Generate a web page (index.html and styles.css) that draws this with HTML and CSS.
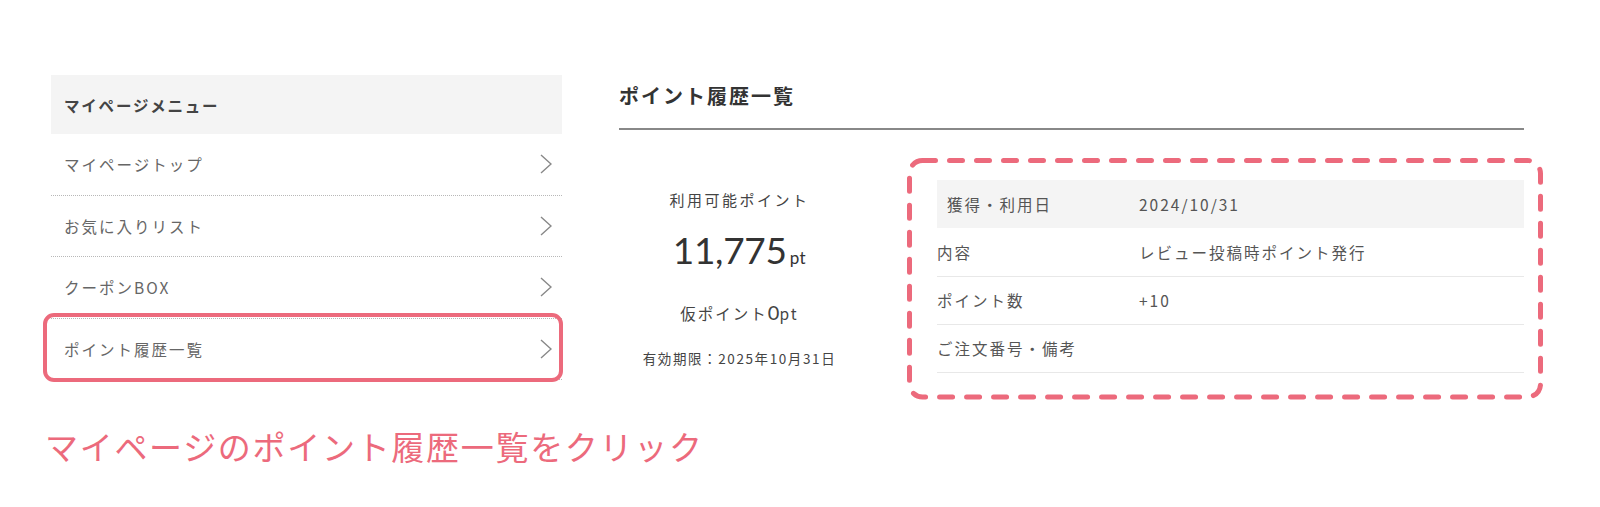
FILE: index.html
```html
<!DOCTYPE html>
<html lang="ja">
<head>
  <meta charset="UTF-8">
  <meta name="viewport" content="width=device-width, initial-scale=1.0">
  <title>ポイント履歴一覧</title>
  <link rel="stylesheet" href="styles.css">
</head>
<body>

  <div class="page">
    <div class="columns">
      <nav class="side-menu">
        <div class="menu-head">マイページメニュー</div>
        <a class="menu-item" href="#">マイページトップ<svg class="chev" viewBox="0 0 12 20"><polyline points="1,1 11,10 1,19"></polyline></svg></a>
        <a class="menu-item" href="#">お気に入りリスト<svg class="chev" viewBox="0 0 12 20"><polyline points="1,1 11,10 1,19"></polyline></svg></a>
        <a class="menu-item" href="#">クーポンBOX<svg class="chev" viewBox="0 0 12 20"><polyline points="1,1 11,10 1,19"></polyline></svg></a>
        <a class="menu-item is-marked" href="#">ポイント履歴一覧<svg class="chev" viewBox="0 0 12 20"><polyline points="1,1 11,10 1,19"></polyline></svg></a>
      </nav>

      <section class="main">
        <h2 class="main-title">ポイント履歴一覧</h2>

        <div class="point-body">
          <div class="summary">
            <p class="sum-label">利用可能ポイント</p>
            <p class="sum-total">11,775<span class="unit">pt</span></p>
            <p class="sum-temp">仮ポイント<span class="temp-num">0</span>pt</p>
            <p class="sum-limit">有効期限：2025年10月31日</p>
          </div>

          <div class="history">
            <svg class="dash-frame">
              <rect x="2.5" y="2.5" width="calc(100% - 5px)" height="calc(100% - 5px)" rx="13" ry="13"></rect>
            </svg>
            <table class="history-table">
              <tr class="row-head">
                <th>獲得・利用日</th>
                <td>2024/10/31</td>
              </tr>
              <tr>
                <th>内容</th>
                <td>レビュー投稿時ポイント発行</td>
              </tr>
              <tr>
                <th>ポイント数</th>
                <td>+10</td>
              </tr>
              <tr>
                <th>ご注文番号・備考</th>
                <td></td>
              </tr>
            </table>
          </div>
        </div>
      </section>
    </div>

    <p class="caption">マイページのポイント履歴一覧をクリック</p>
  </div>

</body>
</html>
```

FILE: styles.css
```css
* {
  margin: 0;
  padding: 0;
  box-sizing: border-box;
}

body {
  font-family: "Noto Sans CJK JP", "Noto Sans", sans-serif;
  background-color: #ffffff;
  color: #555;
}

.page {
  padding: 75px 0 0 51px;
}

.columns {
  display: flex;
  gap: 57px;
}

/* side menu */
.side-menu {
  width: 511px;
  display: flex;
  flex-direction: column;
}

.menu-head {
  height: 59px;
  background-color: #f4f4f4;
  padding-left: 13px;
  display: flex;
  align-items: center;
  font-size: 15.5px;
  font-weight: bold;
  letter-spacing: 1.8px;
  color: #444;
}

.menu-item {
  position: relative;
  height: 61.5px;
  padding: 0 10px 0 13px;
  display: flex;
  align-items: center;
  justify-content: space-between;
  border-bottom: 1px dotted #b8b8b8;
  font-size: 15.5px;
  letter-spacing: 2px;
  color: #666;
  text-decoration: none;
}

.chev {
  width: 12px;
  height: 20px;
}

.chev polyline {
  fill: none;
  stroke: #888;
  stroke-width: 1.4;
}

.is-marked::after {
  content: '';
  position: absolute;
  top: -6px;
  left: -8px;
  right: -1px;
  bottom: -3px;
  border: 4.5px solid #ec6a7c;
  border-radius: 11px;
}

/* main */
.main {
  width: 905px;
}

.main-title {
  font-size: 20px;
  line-height: 41px;
  letter-spacing: 2px;
  color: #333;
  padding-bottom: 12px;
  border-bottom: 2px solid #888;
}

.point-body {
  display: flex;
  gap: 77px;
  margin-top: 50px;
}

.summary {
  width: 241px;
  display: flex;
  flex-direction: column;
  align-items: center;
  text-align: center;
  color: #444;
}

.sum-label {
  margin-top: 8px;
  line-height: 24px;
  font-size: 15px;
  letter-spacing: 2.5px;
}

.sum-total {
  margin-top: 13px;
  line-height: 50px;
  font-family: "Lato", "Noto Sans", sans-serif;
  font-size: 37px;
  letter-spacing: -0.3px;
  color: #333;
}

.sum-total .unit {
  font-size: 17px;
  margin-left: 3px;
  letter-spacing: 0.5px;
}

.sum-temp {
  margin-top: 17px;
  line-height: 24px;
  font-size: 15.5px;
  letter-spacing: 2px;
}

.temp-num {
  font-family: "Lato", "Noto Sans", sans-serif;
  font-size: 20px;
  letter-spacing: 0;
}

.sum-limit {
  margin-top: 23px;
  line-height: 20px;
  font-size: 13.5px;
  letter-spacing: 1.6px;
}

/* history table */
.history {
  position: relative;
  width: 587px;
}

.dash-frame {
  position: absolute;
  top: -22px;
  left: -30px;
  width: calc(100% + 49px);
  height: calc(100% + 49px);
  overflow: visible;
}

.dash-frame rect {
  fill: none;
  stroke: #ec6a7c;
  stroke-width: 5;
  stroke-dasharray: 13 14;
  stroke-linecap: round;
}

.history-table {
  width: 100%;
  border-collapse: collapse;
  font-size: 15.5px;
  letter-spacing: 2px;
  color: #555;
}

.history-table th,
.history-table td {
  height: 48px;
  text-align: left;
  font-weight: normal;
  vertical-align: middle;
}

.history-table th {
  width: 202px;
}

.history-table td {
  letter-spacing: 2px;
}

.history-table tr {
  border-bottom: 1px solid #e8e8e8;
}

.history-table .row-head {
  background-color: #f4f4f4;
  border-bottom: none;
}

.history-table .row-head th {
  padding-left: 10px;
}

/* caption */
.caption {
  margin: 41px 0 0 -6px;
  line-height: 50px;
  font-size: 33px;
  letter-spacing: 1.7px;
  color: #ec6a7c;
}
```
